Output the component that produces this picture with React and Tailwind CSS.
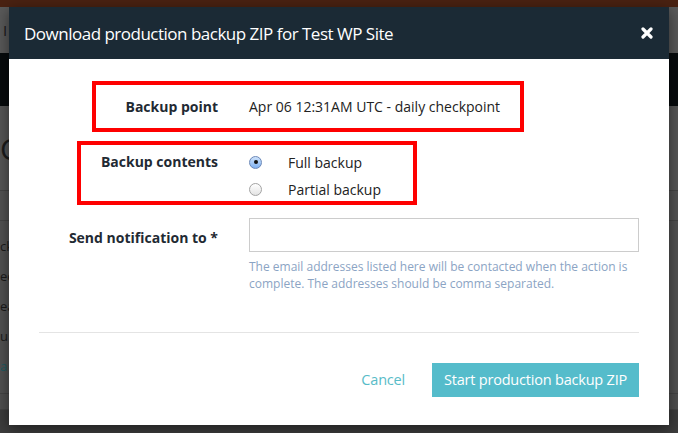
export default function App() {
  return (
    <div className="relative w-[678px] h-[433px] overflow-hidden bg-[#4f4f4f] font-['Open_Sans',sans-serif]">
      {/* dimmed page behind the modal */}
      <div className="flex flex-col h-full">
        <div className="h-[7px] bg-[#4a2212]"></div>
        <div className="h-[46px] bg-[#5a5a5a] flex items-center px-[3px] text-[#1a1a1a] text-[15px]">I</div>
        <div className="h-[53px] bg-[#070b0d]"></div>
        <div className="h-[84px] bg-[#565656] flex items-center text-[#1b1b1b] text-[30px] pl-0">C</div>
        <div className="h-[30px] border-t border-[#454545] bg-[#535353]"></div>
        <div className="flex-1 border-t border-[#454545] bg-[#525252] text-[#1a1a1a] text-[13px] leading-[30px] pt-[10px] pl-0">
          <div>ck</div>
          <div>ec</div>
          <div>ea</div>
          <div>u</div>
          <div className="text-[#1f5c62]">a</div>
        </div>
        <div className="h-[16px] border-t border-[#454545] bg-[#505050]"></div>
        <div className="h-[24px] border-t border-[#454545] bg-[#3d3d3d]"></div>
      </div>

      {/* modal */}
      <div className="absolute left-[9px] top-[7px] w-[660px] h-[418px] bg-white shadow-[0_4px_14px_rgba(0,0,0,0.5)] flex flex-col">
        <div className="h-[52px] bg-[#1b2a35] flex items-center justify-between pl-[15px] pr-[16px]">
          <h2 className="text-white text-[17px] tracking-[-0.5px] leading-none">Download production backup ZIP for Test WP Site</h2>
          <svg width="12" height="12" viewBox="0 0 12 12">
            <path d="M2 2L10 10M10 2L2 10" stroke="white" strokeWidth="3.2" strokeLinecap="round" />
          </svg>
        </div>

        <div className="flex-1 flex flex-col px-[30px] pt-[22px] text-[14px] text-[#222]">
          {/* Backup point */}
          <div className="ml-[53px] w-[432px] h-[51px] border-4 border-[#fe0000] flex items-center">
            <div className="w-[122px] text-right font-bold text-[#1f2a33]">Backup point</div>
            <div className="ml-[31px]">Apr 06 12:31AM UTC - daily checkpoint</div>
          </div>

          {/* Backup contents */}
          <div className="mt-[9px] ml-[38px] w-[340px] h-[64px] border-4 border-[#fe0000] flex pt-[7px]">
            <div className="w-[137px] text-right font-bold text-[#1f2a33] leading-[20px]">Backup contents</div>
            <div className="ml-[31px] flex flex-col gap-[7px]">
              <label className="flex items-center h-[20px]">
                <span className="w-[13px] h-[13px] rounded-full border border-[#6b88b8] bg-gradient-to-b from-[#cfe3fb] to-[#7fb0f0] flex items-center justify-center">
                  <span className="w-[4px] h-[4px] rounded-full bg-[#111]"></span>
                </span>
                <span className="ml-[26px]">Full backup</span>
              </label>
              <label className="flex items-center h-[20px]">
                <span className="w-[13px] h-[13px] rounded-full border border-[#a3a3a3] bg-gradient-to-b from-[#ffffff] to-[#e3e3e3]"></span>
                <span className="ml-[26px]">Partial backup</span>
              </label>
            </div>
          </div>

          {/* Send notification */}
          <div className="mt-[13px] flex">
            <div className="w-[179px] text-right font-bold text-[#1f2a33] pt-[9px]">Send notification to *</div>
            <div className="ml-[31px] flex-1">
              <input className="w-full h-[34px] border border-[#cccccc] outline-none px-2" />
              <p className="mt-[6px] text-[12px] leading-[17px] text-[#8ba4c4]">
                The email addresses listed here will be contacted when the action is complete. The addresses should be comma separated.
              </p>
            </div>
          </div>

          <div className="mt-[40px] border-t border-[#e4e4e4]"></div>

          <div className="mt-[30px] flex items-center justify-end">
            <button className="text-[#58bcc8] text-[14.5px] tracking-[-0.2px]">Cancel</button>
            <button className="ml-[27px] h-[34px] w-[207px] bg-[#55bccb] text-white text-[14.5px] tracking-[-0.2px]">Start production backup ZIP</button>
          </div>
        </div>
      </div>
    </div>
  )
}
